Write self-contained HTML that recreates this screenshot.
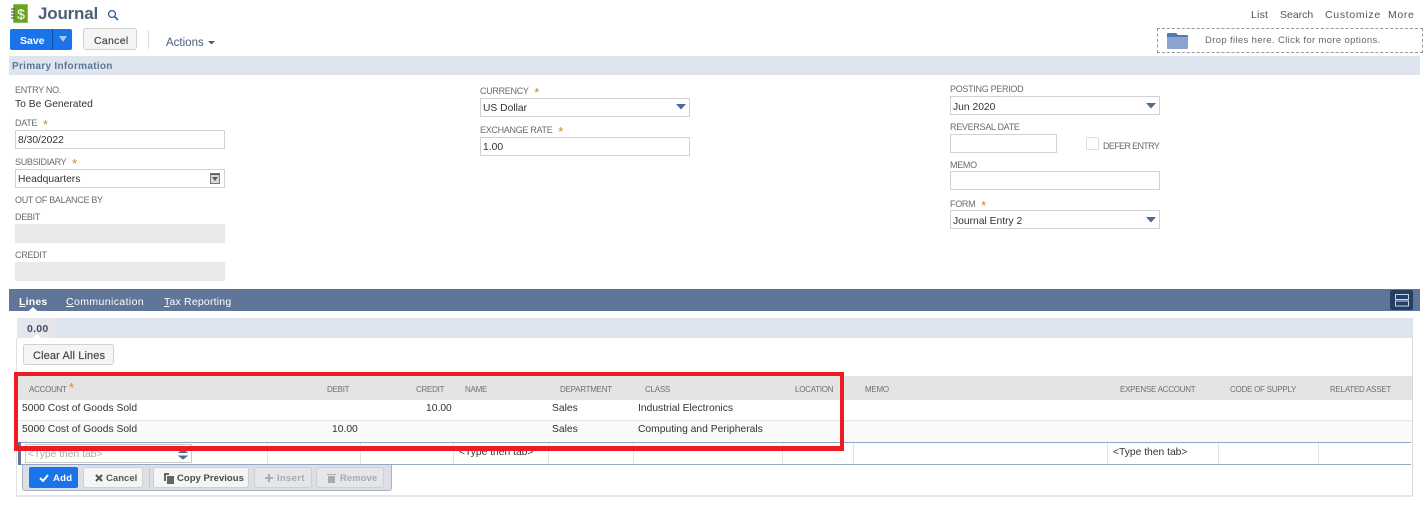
<!DOCTYPE html>
<html lang="en"><head><meta charset="utf-8"><title>Journal</title>
<style>
html,body{margin:0;padding:0;background:#fff}
#p{position:relative;width:1425px;height:511px;overflow:hidden;background:#fff;font-family:"Liberation Sans",sans-serif;filter:blur(.3px)}
#p div,#p span.t,#p svg{position:absolute}
.t{position:absolute;white-space:nowrap;line-height:14px;height:14px}
.l{font-size:9px;color:#6b6b6b;letter-spacing:-.3px;margin-top:0}
.v{font-size:10.3px;color:#333;letter-spacing:0;margin-top:2px}
.h{font-size:8px;color:#6f6f6f;letter-spacing:-.25px;margin-top:1px}
.s{color:#c98a2b;font-size:13px;font-weight:normal;vertical-align:-3px;letter-spacing:0}
.i{box-sizing:border-box;border:1px solid #d2d2d2;background:#fff;height:19px}
.g{background:#e9e9e9;height:19px;width:210px;left:15px}
.b{box-sizing:border-box;border:1px solid #d0d0d0;border-radius:3px;background:#f5f5f5;height:21px}
.bt{font-size:9.5px;font-weight:bold;letter-spacing:.03px;color:#555;margin-top:1px}
.ln{background:#e2e3e5}
</style></head><body><div id="p">

<div style="left:13px;top:4px;width:15px;height:19px;box-sizing:border-box;background:#68a51f;border:1px solid #8dbd55;border-radius:1px"></div>
<svg style="left:11px;top:4px" width="5" height="19"><g stroke="#444" stroke-width="1"><path d="M0 5h4M0 8h4M0 11h4M0 14h4"/></g></svg>
<span class="t" style="left:15px;top:7px;width:12px;text-align:center;color:#fff;font-size:14px">$</span>
<span class="t" style="left:38px;top:7px;font-size:17px;font-weight:bold;color:#4f5f78;letter-spacing:-.2px">Journal</span>
<svg style="left:107px;top:9px" width="13" height="12"><circle cx="5" cy="5" r="3.4" fill="none" stroke="#2f5e96" stroke-width="1.3"/><path d="M7.6 7.6L11 11" stroke="#2f5e96" stroke-width="1.6"/></svg>

<span class="t" style="left:1251px;top:8px;font-size:10.5px;color:#555;letter-spacing:.2px">List</span>
<span class="t" style="left:1280px;top:8px;font-size:10.5px;color:#555;letter-spacing:0">Search</span>
<span class="t" style="left:1325px;top:8px;font-size:10.5px;color:#555;letter-spacing:.7px">Customize</span>
<span class="t" style="left:1388px;top:8px;font-size:10.5px;color:#555;letter-spacing:.65px">More</span>

<div style="left:10px;top:29px;width:62px;height:21px;background:#1a73e8;border-radius:2px"></div>
<div style="left:52px;top:29px;width:1px;height:21px;background:#0c4fa8"></div>
<span class="t" style="left:20px;top:33px;font-size:10.5px;font-weight:bold;color:#fff;letter-spacing:0;margin-top:1px">Save</span>
<svg style="left:59px;top:36px" width="9" height="7"><path d="M0 0h8L4 6z" fill="#a9c8ef"/></svg>
<div class="b" style="left:83px;top:28px;width:54px;height:22px"></div>
<span class="t" style="left:94px;top:33px;font-size:10.5px;color:#444;letter-spacing:.3px;-webkit-text-stroke:.2px #555;margin-top:1px">Cancel</span>
<div style="left:148px;top:30px;width:1px;height:19px;background:#ddd"></div>
<span class="t" style="left:166px;top:36px;font-size:11.5px;color:#475c7c;letter-spacing:0">Actions</span>
<svg style="left:208px;top:41px" width="7" height="4"><path d="M0 0h7L3.500 3.500z" fill="#475c7c"/></svg>

<div style="left:1157px;top:28px;width:266px;height:25px;box-sizing:border-box;border:1px dashed #999"></div>
<svg style="left:1167px;top:33px" width="21" height="16"><path d="M0 1q0-1 1-1h8l2 2h9q1 0 1 1v2H0z" fill="#5277b2"/><rect y="4" width="21" height="12" rx="1" fill="#8ca5d0"/></svg>
<span class="t" style="left:1205px;top:33px;font-size:9.5px;color:#666;letter-spacing:.35px;margin-top:1px">Drop files here. Click for more options.</span>

<div style="left:9px;top:56px;width:1411px;height:19px;background:#dfe5ee"></div>
<span class="t" style="left:12px;top:60px;font-size:10px;font-weight:bold;color:#5b7596;letter-spacing:.3px">Primary Information</span>

<span class="t l" style="left:15px;top:83px">ENTRY NO.</span>
<span class="t v" style="left:15px;top:96px">To Be Generated</span>
<span class="t l" style="left:15px;top:116px">DATE <span class="s">&nbsp;*</span></span>
<div class="i" style="left:15px;top:130px;width:210px"></div>
<span class="t v" style="left:18px;top:132px">8/30/2022</span>
<span class="t l" style="left:15px;top:155px">SUBSIDIARY <span class="s">&nbsp;*</span></span>
<div class="i" style="left:15px;top:169px;width:210px"></div>
<span class="t v" style="left:18px;top:171px">Headquarters</span>
<svg style="left:210px;top:173px" width="10" height="11"><rect x=".5" y=".5" width="9" height="10" fill="#d8d8d8" stroke="#777"/><path d="M1 1.500h8" stroke="#555"/><path d="M2 4h6L5 8z" fill="#44597c"/></svg>
<span class="t l" style="left:15px;top:193px">OUT OF BALANCE BY</span>
<span class="t l" style="left:15px;top:210px">DEBIT</span>
<div class="g" style="top:224px"></div>
<span class="t l" style="left:15px;top:248px">CREDIT</span>
<div class="g" style="top:262px"></div>

<span class="t l" style="left:480px;top:84px">CURRENCY <span class="s">&nbsp;*</span></span>
<div class="i" style="left:480px;top:98px;width:210px"></div>
<span class="t v" style="left:483px;top:100px">US Dollar</span>
<svg style="left:676px;top:104px" width="10" height="6"><path d="M0 0h10L5 5.500z" fill="#4d6a94"/></svg>
<span class="t l" style="left:480px;top:123px">EXCHANGE RATE <span class="s">&nbsp;*</span></span>
<div class="i" style="left:480px;top:137px;width:210px"></div>
<span class="t v" style="left:483px;top:139px">1.00</span>

<span class="t l" style="left:950px;top:82px">POSTING PERIOD</span>
<div class="i" style="left:950px;top:96px;width:210px"></div>
<span class="t v" style="left:953px;top:99px">Jun 2020</span>
<svg style="left:1146px;top:103px" width="10" height="6"><path d="M0 0h10L5 5.500z" fill="#4d6a94"/></svg>
<span class="t l" style="left:950px;top:120px">REVERSAL DATE</span>
<div class="i" style="left:950px;top:134px;width:107px"></div>
<div style="left:1086px;top:137px;width:13px;height:13px;box-sizing:border-box;border:1px solid #ddd;border-radius:2px"></div>
<span class="t l" style="left:1103px;top:139px;letter-spacing:-.65px">DEFER ENTRY</span>
<span class="t l" style="left:950px;top:158px">MEMO</span>
<div class="i" style="left:950px;top:171px;width:210px"></div>
<span class="t l" style="left:950px;top:197px">FORM <span class="s">&nbsp;*</span></span>
<div class="i" style="left:950px;top:210px;width:210px"></div>
<span class="t v" style="left:953px;top:213px">Journal Entry 2</span>
<svg style="left:1146px;top:217px" width="10" height="6"><path d="M0 0h10L5 5.500z" fill="#4d6a94"/></svg>

<div style="left:9px;top:289px;width:1411px;height:22px;background:#5f7699"></div>
<span class="t" style="left:19px;top:295px;font-size:10.5px;font-weight:bold;color:#fff;letter-spacing:.2px"><u>L</u>ines</span>
<span class="t" style="left:66px;top:295px;font-size:10.5px;color:#fff;letter-spacing:.4px"><u>C</u>ommunication</span>
<span class="t" style="left:164px;top:295px;font-size:10.5px;color:#fff;letter-spacing:.2px"><u>T</u>ax Reporting</span>
<svg style="left:28px;top:307px" width="10" height="5"><path d="M0 4.500L5 0l5 4.500z" fill="#fff"/></svg>
<div style="left:1390px;top:290px;width:23px;height:20px;background:#243e66;border-radius:2px"></div>
<svg style="left:1395px;top:294px" width="14" height="13"><rect x=".5" y=".5" width="13" height="5" fill="none" stroke="#cdd5e2"/><rect x=".5" y="7" width="13" height="5" fill="none" stroke="#cdd5e2"/></svg>

<div style="left:17px;top:318px;width:1396px;height:20px;background:#dfe5ee"></div>
<div style="left:17px;top:318px;width:40px;height:20px;background:#e4e6ec"></div>
<span class="t" style="left:27px;top:322px;font-size:10.5px;font-weight:bold;color:#3e4e63;letter-spacing:.25px">0.00</span>
<svg style="left:32px;top:334px" width="10" height="5"><path d="M0 4.500L5 0l5 4.500z" fill="#fff"/></svg>
<div style="left:16px;top:338px;width:1px;height:158px;background:#e2e2e2"></div>
<div style="left:1412px;top:338px;width:1px;height:158px;background:#d8d8d8"></div>
<div style="left:16px;top:495px;width:1397px;height:2px;background:#e6e6e6"></div>
<div class="b" style="left:23px;top:344px;width:91px;height:21px"></div>
<span class="t" style="left:33px;top:349px;font-size:11px;color:#444;letter-spacing:.12px;-webkit-text-stroke:.2px #555">Clear All Lines</span>

<div style="left:17px;top:376px;width:1395px;height:24px;background:#e4e4e4"></div>
<span class="t h" style="left:29px;top:382px">ACCOUNT</span><span class="t s" style="left:69px;top:381px">*</span>
<span class="t h" style="left:327px;top:382px">DEBIT</span>
<span class="t h" style="left:416px;top:382px">CREDIT</span>
<span class="t h" style="left:465px;top:382px">NAME</span>
<span class="t h" style="left:560px;top:382px">DEPARTMENT</span>
<span class="t h" style="left:645px;top:382px">CLASS</span>
<span class="t h" style="left:795px;top:382px">LOCATION</span>
<span class="t h" style="left:865px;top:382px">MEMO</span>
<span class="t h" style="left:1120px;top:382px">EXPENSE ACCOUNT</span>
<span class="t h" style="left:1230px;top:382px">CODE OF SUPPLY</span>
<span class="t h" style="left:1330px;top:382px">RELATED ASSET</span>

<div style="left:17px;top:420px;width:1395px;height:1px;background:#e8e8e8"></div>
<div style="left:17px;top:421px;width:1395px;height:21px;background:#f9f9f9"></div>
<span class="t v" style="left:22px;top:400px">5000 Cost of Goods Sold</span>
<span class="t v" style="left:426px;top:400px">10.00</span>
<span class="t v" style="left:552px;top:400px">Sales</span>
<span class="t v" style="left:638px;top:400px">Industrial Electronics</span>
<span class="t v" style="left:22px;top:421px">5000 Cost of Goods Sold</span>
<span class="t v" style="left:332px;top:421px">10.00</span>
<span class="t v" style="left:552px;top:421px">Sales</span>
<span class="t v" style="left:638px;top:421px">Computing and Peripherals</span>

<div style="left:18px;top:442px;width:1393px;height:1px;background:#94a7c6"></div>
<div style="left:18px;top:464px;width:1393px;height:1px;background:#94a7c6"></div>
<div style="left:18px;top:442px;width:3px;height:23px;background:#5f7699"></div>
<div class="ln" style="left:267px;top:443px;width:1px;height:21px"></div>
<div class="ln" style="left:360px;top:443px;width:1px;height:21px"></div>
<div class="ln" style="left:453px;top:443px;width:1px;height:21px"></div>
<div class="ln" style="left:548px;top:443px;width:1px;height:21px"></div>
<div class="ln" style="left:633px;top:443px;width:1px;height:21px"></div>
<div class="ln" style="left:782px;top:443px;width:1px;height:21px"></div>
<div class="ln" style="left:853px;top:443px;width:1px;height:21px"></div>
<div class="ln" style="left:1107px;top:443px;width:1px;height:21px"></div>
<div class="ln" style="left:1218px;top:443px;width:1px;height:21px"></div>
<div class="ln" style="left:1318px;top:443px;width:1px;height:21px"></div>
<div style="left:25px;top:444px;width:167px;height:19px;box-sizing:border-box;border:1px solid #ccc;background:#fff"></div>
<span class="t v" style="left:28px;top:446px;color:#aaa">&lt;Type then tab&gt;</span>
<svg style="left:177px;top:448px" width="12" height="12"><path d="M1.500 5L6 1.500 10.500 5M1.500 7.500L6 11 10.500 7.500" fill="#4d6a94" stroke="#4d6a94" stroke-width="1"/></svg>
<span class="t v" style="left:459px;top:444px">&lt;Type then tab&gt;</span>
<span class="t v" style="left:1113px;top:444px">&lt;Type then tab&gt;</span>

<div style="left:22px;top:465px;width:370px;height:26px;box-sizing:border-box;background:#dcdfe4;border:1px solid #a9b4c6;border-top:0;border-radius:0 0 3px 3px"></div>
<div style="left:29px;top:467px;width:49px;height:21px;background:#1a73e8;border-radius:2px"></div>
<svg style="left:39px;top:474px" width="10" height="8"><path d="M1 4l3 3 5-6" fill="none" stroke="#fff" stroke-width="2"/></svg>
<span class="t bt" style="left:53px;top:471px;color:#fff;letter-spacing:.3px">Add</span>
<div class="b" style="left:83px;top:467px;width:60px"></div>
<svg style="left:95px;top:474px" width="8" height="8"><path d="M1 1l6 6M7 1L1 7" stroke="#555" stroke-width="2"/></svg>
<span class="t bt" style="left:106px;top:471px">Cancel</span>
<div style="left:149px;top:468px;width:1px;height:19px;background:#c2c6cc"></div>
<div class="b" style="left:153px;top:467px;width:96px"></div>
<svg style="left:164px;top:473px" width="10" height="11"><path d="M0 0h5v2H2v6H0z" fill="#666"/><rect x="3" y="3" width="7" height="8" fill="#666"/></svg>
<span class="t bt" style="left:177px;top:471px;color:#4a4a4a">Copy Previous</span>
<div class="b" style="left:254px;top:467px;width:58px;background:#e4e6ea;border-color:#cdcfd3"></div>
<svg style="left:265px;top:474px" width="8" height="8"><path d="M4 0v8M0 4h8" stroke="#aaa" stroke-width="2"/></svg>
<span class="t bt" style="left:277px;top:471px;color:#aaa;letter-spacing:.3px">Insert</span>
<div class="b" style="left:316px;top:467px;width:68px;background:#e4e6ea;border-color:#cdcfd3"></div>
<svg style="left:327px;top:473px" width="9" height="10"><path d="M0 1h9v1H0zM1 3h7v7H1z" fill="#aaa"/></svg>
<span class="t bt" style="left:340px;top:471px;color:#aaa">Remove</span>

<div style="left:14px;top:372px;width:830px;height:79px;box-sizing:border-box;border:4px solid #ed1c24;border-bottom-width:5px"></div>
</div></body></html>
